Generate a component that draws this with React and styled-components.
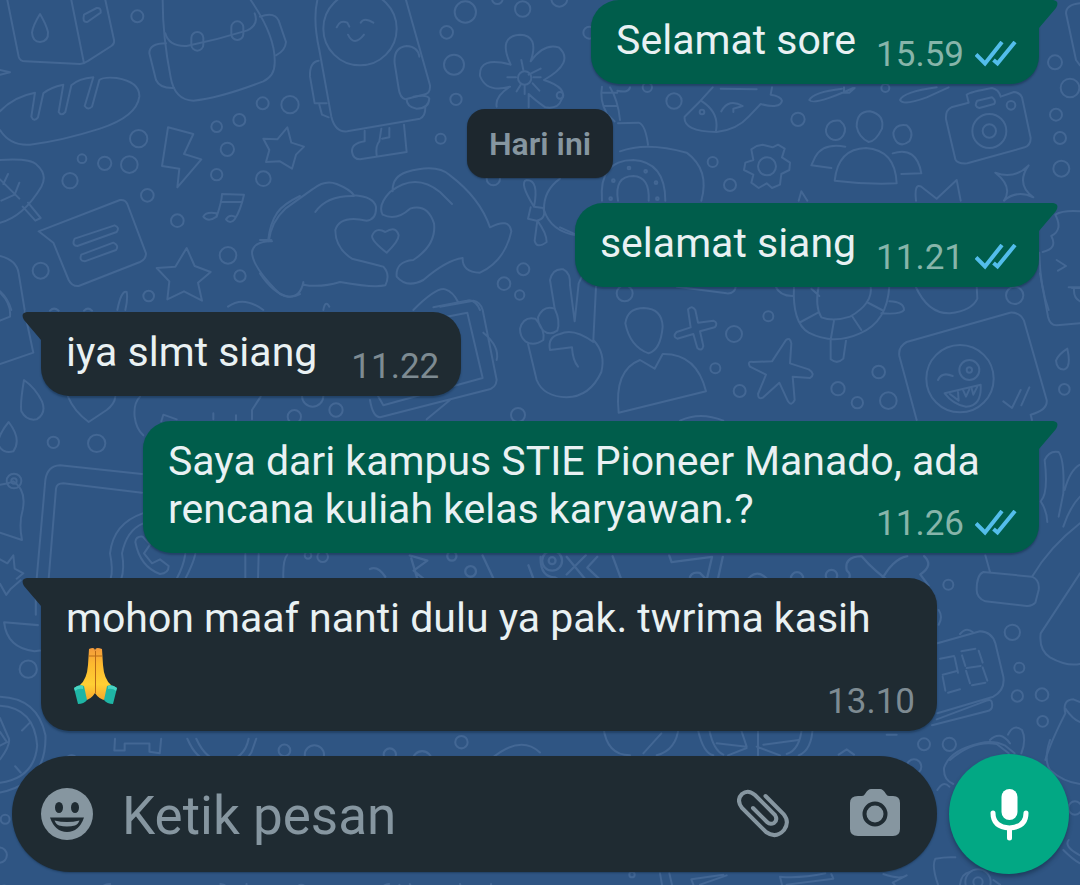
import React from "react";
import styled, { createGlobalStyle } from "styled-components";

const colors = {
  wall: "#2f5583",
  line: "#436794",
  outgoing: "#005d4b",
  incoming: "#1f2b32",
  text: "#e9f1f3",
  muted: "#8696a0",
  time: "#7e8b92",
  timeOut: "#87b5aa",
  tick: "#53bdeb",
  accent: "#02a884",
};

const GlobalStyle = createGlobalStyle`
  *, *::before, *::after { box-sizing: border-box; }
  body {
    margin: 0;
    background: ${colors.wall};
    font-family: Roboto, "Liberation Sans", sans-serif;
  }
`;

const Screen = styled.div`
  position: relative;
  display: flex;
  flex-direction: column;
  min-height: 100vh;
  overflow: hidden;
`;

const WallpaperArt = styled.svg`
  position: absolute;
  inset: 0;
  width: 100%;
  height: 100%;
  fill: none;
  stroke: ${colors.line};
  stroke-width: 6;
  stroke-linecap: round;
  stroke-linejoin: round;
`;

const Conversation = styled.main`
  position: relative;
  flex: 1;
  display: flex;
  flex-direction: column;
  gap: 25px;
  padding: 0 41px 23px;
`;

const DateChip = styled.div`
  align-self: center;
  padding: 15px 22px 13px;
  border-radius: 18px;
  background: #1d272e;
  color: ${colors.muted};
  font-size: 32px;
  font-weight: 600;
  line-height: 41px;
  box-shadow: 0 1px 2px rgba(0, 0, 0, 0.3);
`;

const Bubble = styled.article`
  position: relative;
  align-self: ${(p) => (p.$mine ? "flex-end" : "flex-start")};
  display: grid;
  grid-template-columns: auto auto;
  column-gap: ${(p) => (p.$mine ? "20px" : "34px")};
  max-width: 896px;
  padding: 16px 22px 9px 25px;
  border-radius: ${(p) => (p.$mine ? "28px 0 28px 28px" : "0 28px 28px 28px")};
  background: ${(p) => (p.$mine ? colors.outgoing : colors.incoming)};
  box-shadow: 0 2px 2px rgba(10, 30, 50, 0.35);
`;

const Tail = styled.svg`
  position: absolute;
  top: 0;
  width: 20px;
  height: 34px;
  fill: ${(p) => (p.$mine ? colors.outgoing : colors.incoming)};
  ${(p) => (p.$mine ? "right: -19px;" : "left: -19px; transform: scaleX(-1);")}
`;

const BubbleText = styled.p`
  grid-row: 1;
  grid-column: ${(p) => (p.$long ? "1 / -1" : "1")};
  margin: 0;
  padding-bottom: 11px;
  color: ${colors.text};
  font-size: 41px;
  line-height: 48px;
`;

const Meta = styled.footer`
  grid-row: 1;
  grid-column: 2;
  align-self: end;
  justify-self: end;
  display: flex;
  align-items: center;
  gap: 11px;
  color: ${(p) => (p.$mine ? colors.timeOut : colors.time)};
  font-size: 35px;
  line-height: 40px;
`;

const TickIcon = styled.svg`
  width: 42px;
  height: 28px;
  fill: none;
  stroke: ${colors.tick};
  stroke-width: 4;
`;

const EmojiIcon = styled.svg`
  width: 58px;
  height: 69px;
  vertical-align: bottom;
`;

const Composer = styled.form`
  position: relative;
  display: flex;
  align-items: center;
  gap: 12px;
  padding: 0 11px 11px 12px;
`;

const InputPill = styled.div`
  flex: 1;
  min-width: 0;
  height: 116px;
  display: flex;
  align-items: center;
  padding: 0 36px 0 29px;
  border-radius: 58px;
  background: ${colors.incoming};
  box-shadow: 0 1px 2px rgba(10, 30, 50, 0.4);
`;

const MessageInput = styled.input`
  flex: 1;
  min-width: 0;
  margin: 0 29px;
  padding: 4px 0 0;
  border: 0;
  outline: 0;
  background: transparent;
  color: ${colors.text};
  font: inherit;
  font-size: 53px;
  line-height: 64px;
  &::placeholder { color: ${colors.muted}; opacity: 1; }
`;

const IconButton = styled.button`
  flex: none;
  display: grid;
  width: 52px;
  height: 52px;
  margin: 0 0 0 ${(p) => (p.$gap ? "60px" : "0")};
  padding: 0;
  border: 0;
  background: transparent;
  color: ${colors.muted};
  svg { width: 52px; height: 52px; }
`;

const MicButton = styled.button`
  flex: none;
  display: grid;
  place-items: center;
  width: 120px;
  height: 120px;
  padding: 0;
  border: 0;
  border-radius: 50%;
  background: ${colors.accent};
  box-shadow: 0 3px 4px rgba(10, 30, 50, 0.45);
  svg { width: 60px; height: 60px; }
`;

/* Each patch of doodles is drawn on its own enlarged grid. */
const patches = [
  {
    x: 0, y: 0, scale: 3,
    paths: [
      "M22 0L56 170Q60 184 76 184L240 192Q252 192 262 184L334 138Q344 132 342 120L316 0M214 0L252 190",
      "M120 42Q98 78 96 98Q98 126 120 126Q146 124 144 96Q138 72 120 42Z",
      "M252 44L290 24Q304 22 302 38L262 66Q246 68 252 44Z",
      "M0 210L30 217L0 224",
      "M0 334Q40 290 105 278L94 350Q102 368 114 352L130 280Q150 262 190 254L176 336Q184 350 196 336L214 256Q236 236 280 232L254 318Q264 332 276 320L298 240Q310 230 350 234Q420 246 418 290Q410 350 300 386Q180 424 90 434Q30 438 0 390",
      "M488 0Q488 110 512 232Q524 300 580 302Q660 294 790 244Q824 228 824 190Q828 110 752 0",
      "M496 100Q506 140 560 138Q650 120 740 92Q778 74 764 40M498 130Q448 130 448 160L468 240Q480 266 522 264M780 50Q824 34 836 62L858 126Q856 152 828 166",
      "M574 114A18 18 0 0 1 610 114V134A18 18 0 0 1 574 134ZM694 82A18 18 0 0 1 730 82V102A18 18 0 0 1 694 102Z",
      "M504 382L580 402L552 462L604 478L532 562L538 506L486 498Z",
      "M862 382L874 428L912 440L888 464L876 506L840 484L798 486L808 450L790 416L832 418Z",
      "M0 480Q90 474 110 494Q144 524 124 560Q70 650 0 668M0 538L58 596M24 522L10 552M58 548L44 584L4 602M68 620L106 662L122 654L84 608",
      "M116 694L360 600Q376 598 382 612L438 760Q438 778 420 786L236 858Q216 860 206 840L160 728Z",
      "M224 716L344 676Q360 682 350 696L232 738Q214 736 224 716ZM244 764L340 728Q358 736 348 750L254 784Q236 782 244 764Z",
      "M650 650Q666 602 666 582L732 584Q722 630 704 658M662 606H724M650 650Q624 668 610 650Q618 634 650 640ZM704 658Q690 674 678 658Q688 642 704 650",
      "M560 744L584 798L632 816L594 848L606 902L552 874L502 898L508 844L470 804L526 800Z",
      "M900 588Q850 612 832 638Q810 670 804 724H816M804 724Q760 728 756 756Q756 800 840 882Q870 898 900 882",
      "M0 768Q50 780 56 820L74 930M0 874Q24 896 34 930M352 930Q364 870 380 876Q384 896 376 930M684 920Q730 886 790 930",
    ],
    dots: [[412,49,18],[788,310,18],[870,314,26],[718,360,18],[650,380,16],[416,416,26],[682,448,20],[246,476,13],[314,490,20],[388,494,25],[210,542,23],[650,524,17],[790,536,22],[442,586,19],[532,662,19],[684,766,25],[720,828,17],[122,812,24],[446,888,16]],
  },
  {
    x: 260, y: 0, scale: 3,
    paths: [
      "M172 0Q158 60 178 150L214 350Q226 398 262 394L480 356Q496 350 496 322M438 0Q460 80 510 256Q512 282 490 284L436 298Q420 294 416 266L404 190Q400 142 440 138Q474 140 478 170",
      "M230 82Q240 58 262 68L268 80M302 68Q312 50 340 68M264 104Q282 142 312 104M176 182Q148 186 150 230L164 310H200M178 314L186 344L206 352",
      "M440 298Q440 322 470 326Q506 326 508 296Q502 282 460 290M314 392V424Q274 430 276 456Q280 478 300 478L440 456L432 374M364 386L358 424Q346 436 350 468M388 384V412L366 416",
      "M752 194Q712 108 780 104Q838 106 812 184Q852 128 896 142Q946 186 852 240Q926 264 904 300Q894 328 856 322Q824 300 806 282V322M710 320Q704 290 750 260Q680 280 660 228Q656 168 752 194M742 232H768M784 180L790 210M806 224L842 206M820 232H842M818 250L838 272M794 256V282M782 254L770 274",
      "M26 724Q34 664 76 626L160 566Q196 538 230 552Q270 568 282 586Q340 590 348 620Q350 658 320 662Q240 644 226 690Q226 744 276 776Q350 794 370 800Q392 824 376 856Q340 864 240 846Q180 864 130 854V846Q122 892 84 890Q40 880 0 820M166 636Q200 586 282 588M0 720H34",
      "M398 574Q396 530 440 516Q530 490 570 526Q660 594 690 682Q748 652 754 694Q734 784 660 818Q606 816 608 774Q560 780 490 840Q440 866 410 830Q406 784 460 780Q530 734 522 670Q502 610 450 626Q408 664 368 644Q352 616 390 576Q466 516 540 576L576 612",
      "M380 758Q336 724 336 708Q346 680 376 696Q408 676 416 706Q416 724 380 758Z",
      "M822 620Q776 546 800 540Q838 540 822 620L850 624Q860 656 830 662L804 656L812 622M832 662Q860 700 860 726Q830 748 824 722ZM900 536Q850 572 852 630Q872 694 950 706",
      "M460 930Q530 860 556 868Q580 876 594 906M520 922L620 902Q646 896 660 930M190 930Q196 898 208 920",
    ],
    dots: [[300,86,110],[616,36,32],[712,-4,16],[788,27,23],[898,-4,24],[560,97,19],[582,194,30],[588,298,17],[542,416,15],[988,98,18],[794,234,20],[700,536,20]],
  },
  {
    x: 560, y: 0, scale: 3,
    paths: [
      "M126 260Q118 300 140 340L164 364M150 262Q174 300 180 360M126 278H172M132 318H170M172 272Q206 280 210 262M174 370L236 368Q256 374 264 434M180 454Q260 424 380 458Q450 510 424 602",
      "M126 602Q116 480 220 480Q316 486 316 602M174 602Q162 528 220 528Q270 530 266 602M0 682L48 704",
      "M458 262Q420 306 374 350Q368 394 470 396Q530 390 566 350L602 312Q660 328 666 302Q662 288 632 284L636 262M426 304Q478 338 468 392M484 334Q506 294 548 318L520 326V336M482 266L590 268",
      "M748 300Q760 276 846 266M748 300Q760 318 880 264M852 262V278H868L884 264M1020 300Q1030 318 1100 292L1166 262M1020 300Q1030 276 1130 262",
      "M798 388Q804 358 840 362Q864 382 850 406Q834 428 812 416Q796 404 798 388ZM890 380Q890 334 930 334Q974 344 966 386Q946 426 926 426Q896 412 890 380ZM1000 398Q1008 370 1040 376Q1064 396 1048 424Q1028 440 1012 428Q1000 414 1000 398Z",
      "M824 542Q834 446 918 444Q1006 450 1010 550Q920 554 824 542ZM856 440Q790 428 766 470L754 496L814 504M998 460Q1070 438 1084 520L1024 522",
      "M608 434L638 442L654 434L674 446L666 472L690 488L688 510L664 522L660 554L636 564L620 550L596 564L574 548L580 524L552 510L556 488L580 480L574 448L590 438Z",
      "M1174 322L1226 308L1220 284Q1230 276 1296 264Q1316 268 1322 290L1362 276Q1380 278 1386 292L1412 414Q1412 436 1394 442L1222 490Q1192 492 1186 478L1158 358Q1156 330 1174 322ZM1252 302L1296 292Q1310 304 1302 312L1258 324Q1240 320 1252 302Z",
      "M1306 518Q1362 540 1406 496Q1366 552 1420 592Q1370 568 1332 602Q1360 560 1306 518ZM1068 602Q1062 548 1084 560L1130 596L1190 540L1202 602M716 602L724 574L742 602",
      "M1560 634Q1510 630 1486 644Q1510 690 1474 708Q1494 746 1448 756M1438 758Q1440 860 1466 930M1490 780L1518 798L1494 812M1560 10Q1518 14 1518 40L1548 180L1560 196M1536 864H1560",
    ],
    dots: [[0,286,10],[262,262,14],[342,303,23],[426,336,7],[714,358,20],[458,486,15],[510,555,18],[621,499,27],[976,264,12],[1353,316,13],[1288,393,51],[1288,393,20],[1485,187,21],[1530,264,28],[1488,344,18],[1500,414,18],[1504,506,24],[207,504,4],[257,514,4],[160,542,4],[288,548,4],[152,596,4],[292,596,4]],
  },
  {
    x: 700, y: 270, scale: 3,
    paths: [
      "M282 48Q276 158 326 188Q400 226 480 190Q562 156 568 48M356 48Q344 110 364 142Q400 156 450 140Q520 100 512 48M226 48Q240 80 282 78M334 56L358 78M302 156L354 128M402 152L392 210L392 268Q412 284 430 266L438 212M456 138L484 180M500 96L546 120M568 94Q612 96 612 120Q604 134 544 130",
      "M646 48Q684 132 750 130Q816 122 832 86L830 48",
      "M258 210Q270 200 274 220L270 280L326 298Q348 312 330 324L278 320L284 390Q274 410 264 394L238 338L190 382Q174 390 174 372L198 314L150 290Q140 272 160 276L216 274Z",
      "M650 450L598 258Q594 230 620 216L930 128Q960 126 972 152L1040 390Q1044 420 992 434L996 450",
      "M714 330Q726 304 758 318M734 370L842 344Q846 408 798 410Q760 404 734 370ZM750 372L776 392L774 366M790 362L798 380L808 358M814 352L820 374L832 350M910 394L936 414L962 360M964 406L988 352",
      "M1102 236Q1114 290 1094 298Q1070 300 1068 272Q1074 254 1102 236ZM1020 10L1044 140Q1050 166 1070 166L1140 160M1106 52H1140M1122 56Q1120 84 1140 94",
    ],
    dots: [[205,139,15],[119,363,18],[414,356,20],[472,398,17],[536,306,19],[565,392,25],[944,76,26],[780,326,101],[808,300,30],[808,300,8],[1093,358,16]],
  },
  {
    x: 0, y: 290, scale: 3,
    paths: [
      "M72 270Q60 340 64 364Q80 394 110 388Q140 370 126 334Q106 294 72 270ZM26 396Q-10 440 -4 466Q10 492 40 484Q66 448 26 396Z",
      "M0 8Q34 40 30 80L0 92M74 66L100 188L0 222M150 62Q162 50 176 62M252 62Q264 50 276 62",
      "M204 320Q222 364 266 396L320 360Q344 342 346 320M420 320Q400 340 404 380Q408 416 430 436M484 394L490 374L530 388M640 370V388M708 376V390M782 320L756 360V388",
      "M110 866L136 570Q142 528 180 526L426 552M146 866L168 596Q170 580 190 580L426 608",
      "M332 866Q340 840 330 790Q340 700 428 670M364 866Q374 836 366 790Q380 720 430 700M428 740Q408 738 406 756Q420 830 480 852Q506 850 506 828L480 808L456 820L432 790L450 764Z",
      "M0 584Q26 580 40 574Q80 600 68 660Q56 700 66 750L0 728M0 808L22 820L40 796L44 836L70 850L50 866",
      "M1320 50L1420 32Q1440 34 1448 60L1490 270Q1488 296 1460 300L1140 382Q1118 380 1110 330M1340 80L1402 68L1448 264L1150 346L1134 318M1450 128Q1500 170 1490 210M1280 388L1350 330",
      "M556 866Q580 820 586 792M530 866Q550 830 556 792M736 866V792M774 866L776 792M850 866Q848 810 862 794",
    ],
    dots: [[290,460,26],[160,457,17],[42,573,22],[42,573,8],[883,380,20],[1008,360,20],[938,318,32],[968,800,16],[924,796,10]],
  },
  {
    x: 440, y: 260, scale: 3,
    paths: [
      "M344 146L330 60Q338 24 370 28Q392 38 390 76L404 184L416 70L430 40M468 80L460 240Q498 280 484 336Q450 410 380 412Q310 410 290 360L264 252M330 270Q322 230 360 222Q400 202 460 246M330 270L396 262Q398 300 414 320",
      "M240 206Q250 168 286 176Q316 210 310 240Q280 260 256 244Q240 230 240 206ZM294 172Q310 134 344 146Q362 184 352 212Q330 228 310 212Q294 196 294 172Z",
      "M556 190Q562 144 612 144Q666 146 668 200Q662 270 626 280Q570 260 556 190ZM536 458Q522 330 600 300L644 326L668 282Q770 280 798 394Z",
      "M744 148Q756 134 766 150L774 188L820 182Q836 188 824 202L780 214L790 258Q786 276 772 264L760 222L712 236Q696 230 710 216L752 202ZM720 482Q780 454 850 482M710 80L860 100Q884 102 888 78",
    ],
    dots: [[250,28,18],[192,71,19],[239,105,14],[234,465,21],[554,100,24],[882,222,24],[826,325,15]],
  },
  {
    x: 360, y: 540, scale: 2.613,
    paths: [
      "M26 76Q46 66 66 96M130 40L176 54L140 80L182 114M134 48L154 116M320 40L356 116M472 44Q470 96 510 98L540 116M590 40L540 90M540 44L600 116M620 44L594 72L640 116M660 42L686 112M808 40L814 58L920 44L904 112M948 44L932 116M862 108Q858 82 888 86L912 110M1004 116Q1036 60 1076 116M1266 116Q1290 94 1272 80Q1264 44 1310 42Q1346 84 1394 116M1430 42Q1390 50 1360 110M1474 42Q1500 66 1464 90L1486 120M440 66L452 98",
    ],
    dots: [[289,82,14],[240,42,12],[502,54,26],[502,54,9],[1142,100,16],[1232,93,15]],
  },
  {
    x: 0, y: 570, scale: 2.904,
    paths: [
      "M12 152L110 160M12 152Q20 226 100 236L116 234M0 368Q110 372 132 480Q136 620 0 646M0 394Q100 400 108 510Q100 604 0 618M64 466L86 444M44 570L60 588M0 430L26 490Q30 510 0 550M0 470L20 500L0 510",
      "M334 490L332 524H362V504H434V528L464 532L468 490M544 490Q570 550 610 556M570 490Q600 556 650 556Q710 550 722 490M744 490L730 530L712 556M1422 552Q1510 476 1568 530",
      "M286 945Q290 912 320 912M320 944L650 928Q664 914 640 912M716 912L712 944M1090 945Q1110 912 1130 912M1130 920L1138 944M1160 914L1170 944M1190 912L1200 930M1336 912L1344 944M1426 912V944M0 40L18 72L30 56L60 30M104 64V130",
    ],
    dots: [[82,288,25],[826,524,17],[913,537,28],[1132,536,18],[1226,554,28],[208,556,18],[1340,500,18],[15,724,13],[-2,828,22],[12,928,12],[88,940,14],[875,928,14],[1028,938,12]],
  },
  {
    x: 600, y: 740, scale: 3,
    paths: [
      "M10 -40Q20 46 90 46M170 46Q230 30 236 -40M130 40L184 -20M294 -30Q310 40 340 46M328 -30Q340 30 370 44M596 46Q636 30 638 -40M560 42Q600 30 606 -40M350 10L440 20L420 -40M440 24L384 46M470 20L540 46M490 14L596 0M474 -30V46M716 44L740 28L762 44",
      "M1060 132Q1030 120 1032 84Q1050 30 1140 10M1140 10Q1180 0 1214 16L1244 40M1350 0Q1330 60 1350 90Q1390 126 1440 132M1012 150Q1030 120 1048 140M1406 300Q1390 320 1440 346M1390 330Q1420 360 1440 370",
      "M180 400L186 434M208 400L216 434M280 434L274 418L370 404M300 434L380 406M546 434L540 410Q600 416 676 400M560 434L700 416L694 402M850 402Q900 420 920 406L878 428L884 434M1014 434Q994 376 1006 356Q1040 350 1066 352M1080 434Q1084 400 1110 396M1180 420L1200 434",
    ],
    dots: [[972,13,18],[1048,13,20],[942,80,22],[1425,204,20],[1134,426,38],[1134,426,14],[96,404,8]],
  },
  {
    x: 860, y: 430, scale: 3,
    paths: [
      "M562 276Q560 240 542 214Q566 190 554 90Q568 60 596 66Q614 90 610 190L596 260M614 180Q630 120 660 104M610 290Q630 230 660 200M516 440Q570 350 660 280M376 376L390 426M370 426L516 440Q540 450 536 480L526 518Q514 530 500 528L376 514Q350 504 350 480Q350 434 370 426Z",
      "M660 430L542 610Q536 660 570 682Q620 710 660 702M232 640L360 604Q396 606 406 640L430 740Q436 780 400 800L232 850M300 612Q318 590 338 606M230 868L380 812Q396 806 396 820Q400 840 380 844L216 886",
      "M240 686L282 678M284 682L294 728M248 734L288 724M248 740L256 782M264 788L300 778M304 664L346 656M306 676L316 708M356 662L368 698M320 714L362 708M318 722L330 760M368 712L382 752M336 766L376 758",
      "M270 990Q340 930 410 942L446 970M390 930Q420 900 450 940M444 914Q460 880 486 900Q500 930 484 970M556 990Q570 940 616 850M616 850Q606 810 640 808L660 816M616 836Q640 870 660 876M236 540Q250 560 236 584M80 914H110",
    ],
    dots: [[265,464,15],[457,607,23],[478,713,15],[472,798,17],[546,794,19],[548,874,16]],
  },
];

function Wallpaper() {
  return (
    <WallpaperArt viewBox="0 0 1080 885" preserveAspectRatio="xMidYMid slice" aria-hidden="true">
      {patches.map((p) => (
        <g key={`${p.x}-${p.y}`} transform={`translate(${p.x} ${p.y}) scale(${1 / p.scale})`}>
          {p.paths.map((d) => (
            <path key={d} d={d} />
          ))}
          {p.dots.map(([cx, cy, r]) => (
            <circle key={`${cx}-${cy}-${r}`} cx={cx} cy={cy} r={r} />
          ))}
        </g>
      ))}
    </WallpaperArt>
  );
}

function Ticks() {
  return (
    <TickIcon viewBox="0 0 42 28" role="img" aria-label="Dibaca">
      <path d="M1 13.500L10 22.500L27 1" />
      <path d="M18.500 19L22.500 22.500L40 1" />
    </TickIcon>
  );
}

function FoldedHands() {
  return (
    <EmojiIcon viewBox="0 0 58 69" role="img" aria-label="🙏">
      <defs>
        <linearGradient id="skin" x1="0" y1="0" x2="0" y2="1">
          <stop offset="0" stopColor="#f39a3c" />
          <stop offset="0.3" stopColor="#fdb92f" />
          <stop offset="0.7" stopColor="#ffcf34" />
          <stop offset="1" stopColor="#f8a62c" />
        </linearGradient>
      </defs>
      <path d="M23 7Q29 4 29 9V51Q24 59 17 58L14 43Q21 37 22 23Z" fill="url(#skin)" />
      <path d="M36 7Q29 4 29 9V51Q34 59 42 58L45 43Q38 37 37 23Z" fill="url(#skin)" />
      <path d="M29.500 9V51M23 14H36" stroke="#b96a18" strokeWidth="1" fill="none" />
      <path d="M8 46Q13 42 18 44L21 58Q18 62 12 62Z" fill="#1fb5a5" />
      <path d="M51 46Q46 42 41 44L38 58Q41 62 47 62Z" fill="#1fb5a5" />
      <path d="M8 46Q13 42 17 44L17 47Q12 46 9 49ZM51 46Q46 42 42 44L42 47Q47 46 50 49Z" fill="#48d3c2" />
    </EmojiIcon>
  );
}

function Message({ mine, long, time, children }) {
  return (
    <Bubble $mine={mine}>
      <Tail $mine={mine} viewBox="0 0 20 34" aria-hidden="true">
        <path d="M0 0H15Q22 1 18 8L1 28V34H0Z" />
      </Tail>
      <BubbleText $long={long}>{children}</BubbleText>
      <Meta $mine={mine}>
        <time>{time}</time>
        {mine && <Ticks />}
      </Meta>
    </Bubble>
  );
}

export default function App() {
  return (
    <Screen>
      <GlobalStyle />
      <Wallpaper />
      <Conversation>
        <Message mine time="15.59">Selamat sore</Message>
        <DateChip>Hari ini</DateChip>
        <Message mine time="11.21">selamat siang</Message>
        <Message time="11.22">iya slmt siang</Message>
        <Message mine long time="11.26">
          Saya dari kampus STIE Pioneer Manado, ada rencana kuliah kelas karyawan.?
        </Message>
        <Message long time="13.10">
          mohon maaf nanti dulu ya pak. twrima kasih <FoldedHands />
        </Message>
      </Conversation>
      <Composer onSubmit={(e) => e.preventDefault()}>
        <InputPill>
          <IconButton type="button" aria-label="Emoji">
            <svg viewBox="0 0 52 52">
              <circle cx="26" cy="26" r="26" fill="currentColor" />
              <g fill={colors.incoming}>
                <ellipse cx="18" cy="19.500" rx="4" ry="5.500" />
                <ellipse cx="34" cy="19.500" rx="4" ry="5.500" />
                <path d="M9 29.500H43Q38 44 26 44Q14 44 9 29.500Z" />
              </g>
              <path d="M13.500 32.500Q26 35.500 38.500 32.500Q37 36.500 34 37.500Q26 39.500 18 37.500Q15 36.500 13.500 32.500Z" fill="currentColor" />
            </svg>
          </IconButton>
          <MessageInput type="text" aria-label="Ketik pesan" placeholder="Ketik pesan" />
          <IconButton type="button" aria-label="Lampirkan">
            <svg viewBox="0 0 52 52" fill="none" stroke="currentColor" strokeWidth="4" strokeLinecap="round">
              <path d="M28.500 8L46.500 26Q53 34 47 42Q39 51 29 44L5 20Q-1 12 5 6Q11 1 18 7L38 27Q41 32 37 35Q33 37 30 34L16 20" />
            </svg>
          </IconButton>
          <IconButton type="button" $gap aria-label="Kamera">
            <svg viewBox="0 0 52 52">
              <path d="M9 8H13Q15 8 16 6Q19 1 22 1H31Q34 1 37 6Q38 8 40 8H44Q51 8 51 15V41Q51 48 44 48H9Q1 48 1 41V15Q1 8 9 8Z" fill="currentColor" />
              <circle cx="26" cy="26" r="10.500" fill="currentColor" stroke={colors.incoming} strokeWidth="4" />
            </svg>
          </IconButton>
        </InputPill>
        <MicButton type="button" aria-label="Rekam pesan suara">
          <svg viewBox="0 0 60 60">
            <rect x="22.500" y="5" width="16" height="31" rx="8" fill="#fff" />
            <path d="M14 29Q14 43 30.500 44Q47 43 47 29M30.500 44V54" fill="none" stroke="#fff" strokeWidth="5" strokeLinecap="round" />
          </svg>
        </MicButton>
      </Composer>
    </Screen>
  );
}
